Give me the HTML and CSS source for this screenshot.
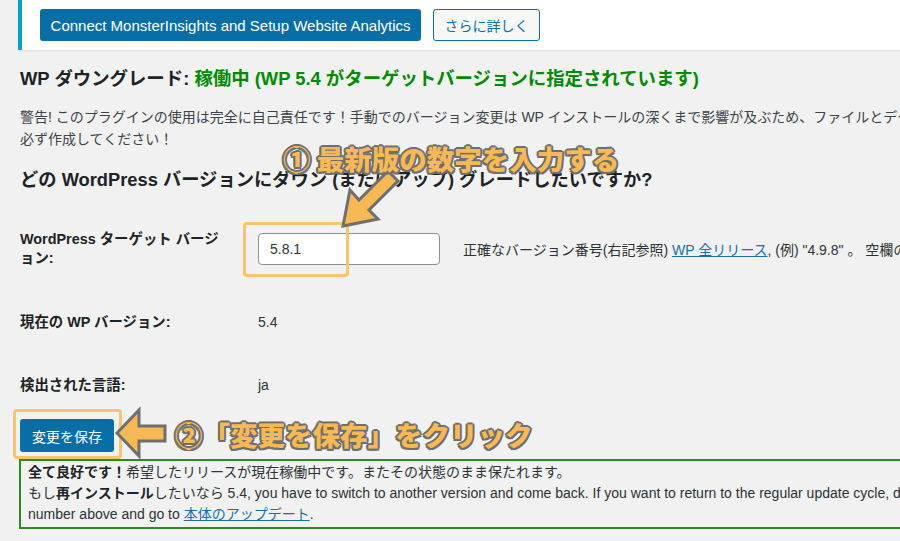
FILE: index.html
```html
<!DOCTYPE html>
<html lang="ja">
<head>
<meta charset="utf-8">
<title>WP Downgrade</title>
<link rel="stylesheet" href="styles.css">
</head>
<body>
<div class="page">
  <div class="notice">
    <a class="btn btn-primary" href="#">Connect MonsterInsights and Setup Website Analytics</a>
    <a class="btn btn-secondary" href="#">さらに詳しく</a>
  </div>

  <div class="content">
    <h1 class="title">WP ダウングレード: <span class="ok">稼働中 (WP 5.4 がターゲットバージョンに指定されています)</span></h1>
    <p class="warn">警告! このプラグインの使用は完全に自己責任です！手動でのバージョン変更は WP インストールの深くまで影響が及ぶため、ファイルとデータベースのバックアップを<br>必ず作成してください！</p>
    <h2 class="question">どの WordPress バージョンにダウン (またはアップ) グレードしたいですか?</h2>

    <div class="form-table">
      <div class="row row-target">
        <div class="th">WordPress ターゲット バージ<br>ョン:</div>
        <div class="td">
          <input class="text-input" type="text" value="5.8.1">
          <span class="desc">正確なバージョン番号(右記参照) <a href="#">WP 全リリース</a>, (例) "4.9.8" 。 空欄のままにすると無効になります。</span>
        </div>
      </div>
      <div class="row row-current">
        <div class="th">現在の WP バージョン:</div>
        <div class="td">5.4</div>
      </div>
      <div class="row row-lang">
        <div class="th">検出された言語:</div>
        <div class="td">ja</div>
      </div>
    </div>

    <button class="save" type="button">変更を保存</button>

    <div class="success">
      <p><strong>全て良好です！</strong>希望したリリースが現在稼働中です。またその状態のまま保たれます。<br>もし<strong>再インストール</strong>したいなら 5.4, you have to switch to another version and come back. If you want to return to the regular update cycle, delete the version<br>number above and go to <a href="#">本体のアップデート</a>.</p>
    </div>
  </div>

  <div class="hl hl-input"></div>
  <div class="hl hl-save"></div>

  <svg class="arrows" width="900" height="541" viewBox="0 0 900 541">
    <polygon points="343,226 350,190 359,200 388,171 398,181 369,210 378,219" fill="#f6b955" stroke="#6f6f6f" stroke-width="3" stroke-linejoin="miter"/>
    <polygon points="117,433 139,410 139,426 165,426 165,441 139,441 139,456" fill="#f6b955" stroke="#6f6f6f" stroke-width="3" stroke-linejoin="miter"/>
  </svg>

  <div class="callout callout-1">① 最新版の数字を入力する</div>
  <div class="callout callout-2">②「変更を保存」をクリック</div>
</div>
</body>
</html>
```

FILE: styles.css
```css
html, body {
  margin: 0;
  padding: 0;
}

body {
  background: #f1f1f1;
  font-family: "Liberation Sans", "Noto Sans CJK JP", sans-serif;
  font-size: 14px;
  color: #3c434a;
  overflow: hidden;
}

.page {
  position: relative;
  width: 900px;
  height: 541px;
  overflow: hidden;
}

/* top notice */
.notice {
  margin-left: 18px;
  width: 1200px;
  background: #fff;
  border-left: 4px solid #00a0d2;
  box-shadow: 0 1px 2px rgba(0, 0, 0, 0.08);
  padding: 9px 18px;
  display: flex;
  gap: 12px;
}

.btn {
  box-sizing: border-box;
  height: 32px;
  display: flex;
  align-items: center;
  border-radius: 3px;
  text-decoration: none;
  white-space: nowrap;
}

.btn-primary {
  background: #0a6ea6;
  color: #fff;
  padding: 0 12px;
  width: 381px;
  justify-content: center;
  font-size: 15px;
}

.btn-secondary {
  background: #f6f7f7;
  color: #0a6ea6;
  border: 1px solid #0a6ea6;
  padding: 0 11px;
  width: 107px;
  justify-content: center;
  font-size: 14px;
}

/* content */
.content {
  margin-left: 20px;
  width: 1200px;
}

.title {
  margin: 16px 0 0;
  font-size: 18.4px;
  line-height: 26px;
  font-weight: 700;
  color: #1d2327;
  white-space: nowrap;
}

.title .ok {
  color: #008a00;
}

.warn {
  margin: 14px 0 0;
  line-height: 22px;
  white-space: nowrap;
}

.question {
  margin: 17px 0 0;
  font-size: 18.3px;
  line-height: 26px;
  font-weight: 700;
  color: #1d2327;
  white-space: nowrap;
}

.form-table {
  margin-top: 21px;
  display: flex;
  flex-direction: column;
}

.row {
  display: grid;
  grid-template-columns: 238px 1fr;
  align-items: center;
}

.row-target { height: 70px; }
.row-current { height: 76px; }
.row-lang { height: 50px; }

.th {
  font-weight: 700;
  font-size: 14.4px;
  color: #1d2327;
  line-height: 19px;
  white-space: nowrap;
}

.td {
  display: flex;
  align-items: center;
  color: #2c3338;
  white-space: nowrap;
}

.text-input {
  box-sizing: border-box;
  width: 182px;
  height: 32px;
  border: 1px solid #8c8f94;
  border-radius: 4px;
  background: #fff;
  padding: 0 11px;
  font-family: inherit;
  font-size: 14px;
  color: #2c3338;
  margin: 0;
}

.desc {
  margin-left: 23px;
}

a {
  color: #1a6fa8;
}

.save {
  margin-top: 9px;
  box-sizing: border-box;
  height: 33px;
  width: 94px;
  padding: 0;
  border: 0;
  border-radius: 3px;
  background: #0a6ea6;
  color: #fff;
  font-family: inherit;
  font-size: 14px;
  display: block;
}

.success {
  margin-top: 7px;
  margin-left: -1px;
  width: 1200px;
  border: 2px solid #2d8a22;
  padding: 1px 7px 2px;
}

.success p {
  margin: 0;
  line-height: 21px;
  color: #2c3338;
  white-space: nowrap;
}

.success strong {
  color: #1d2327;
}

/* annotations */
.hl {
  position: absolute;
  box-sizing: border-box;
  border: 3px solid #f7c56f;
  border-radius: 4px;
}

.hl-input {
  left: 243px;
  top: 222px;
  width: 106px;
  height: 55px;
}

.hl-save {
  left: 13px;
  top: 409px;
  width: 109px;
  height: 50px;
}

.arrows {
  position: absolute;
  left: 0;
  top: 0;
}

.callout {
  position: absolute;
  font-family: "Noto Sans CJK JP", sans-serif;
  font-weight: 900;
  font-size: 27.5px;
  line-height: 34px;
  color: #f6b955;
  white-space: nowrap;
  text-shadow:
    2px 0 0 #6f6f6f, -2px 0 0 #6f6f6f, 0 2px 0 #6f6f6f, 0 -2px 0 #6f6f6f,
    1.5px 1.5px 0 #6f6f6f, -1.5px 1.5px 0 #6f6f6f, 1.5px -1.5px 0 #6f6f6f, -1.5px -1.5px 0 #6f6f6f;
}

.callout-1 {
  left: 283px;
  top: 141px;
}

.callout-2 {
  left: 175px;
  top: 417px;
}
```
